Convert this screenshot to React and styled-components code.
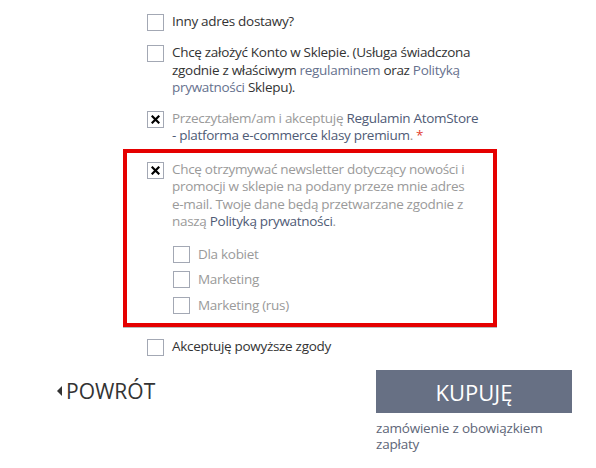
import React from 'react';
import styled, { createGlobalStyle } from 'styled-components';

const GlobalStyle = createGlobalStyle`
    html, body {
        margin: 0;
        padding: 0;
        background: #fff;
    }
    body {
        font-family: "Open Sans", sans-serif;
        font-stretch: 90%;
        color: #333;
    }
`;

const Page = styled.div`
    width: 596px;
    height: 468px;
    padding-top: 13px;
    box-sizing: border-box;
    overflow: hidden;
`;

const Consents = styled.div`
    display: flex;
    flex-direction: column;
    margin-left: 123px;
    width: 374px;
`;

const Consent = styled.label`
    display: flex;
    align-items: flex-start;
    gap: 8px;
    padding: 0 14px 0 24px;
    margin-bottom: ${props => props.$gap || 13}px;
    font-size: 13.5px;
    line-height: 17.5px;
    letter-spacing: -0.3px;
    color: ${props => props.$muted ? '#9a9a9a' : '#333'};
`;

const Highlight = styled.div`
    border: 4px solid #e50000;
    padding: 8px 16px 9px 20px;
    margin-bottom: 11px;
    box-shadow: 0 1px 0 #bbb;

    ${Consent} {
        padding: 0;
        margin-bottom: 0;
    }
`;

const Box = styled.span`
    flex: none;
    display: flex;
    align-items: center;
    justify-content: center;
    width: 17px;
    height: 17px;
    margin-top: 1px;
    box-sizing: border-box;
    border: 1px solid #a3a8b4;
    background: #fff;
`;

const Text = styled.span`
    flex: 1;
`;

const Link = styled.a`
    color: ${props => props.$dark ? '#4f5b76' : '#66718e'};
    text-decoration: none;
`;

const Required = styled.span`
    color: #e23b2e;
`;

const SubList = styled.div`
    display: flex;
    flex-direction: column;
    gap: 8px;
    margin: 15px 0 0 26px;

    ${Consent} {
        align-items: center;
    }
    ${Box} {
        margin-top: 0;
    }
`;

const Footer = styled.div`
    display: flex;
    justify-content: space-between;
    align-items: flex-start;
    padding: 0 24px 0 57px;
    margin-top: 1px;
`;

const Back = styled.a`
    display: flex;
    align-items: center;
    gap: 4px;
    margin-top: 10px;
    font-size: 21px;
    line-height: 22px;
    color: #333;
    cursor: pointer;
`;

const Arrow = styled.span`
    width: 0;
    height: 0;
    border-top: 5px solid transparent;
    border-bottom: 5px solid transparent;
    border-right: 5px solid #333;
`;

const Order = styled.div`
    width: 196px;
`;

const BuyButton = styled.button`
    display: block;
    width: 100%;
    height: 43px;
    border: none;
    background: #677084;
    color: #fff;
    font-family: inherit;
    font-stretch: inherit;
    font-size: 22px;
    cursor: pointer;
`;

const Note = styled.div`
    max-width: 180px;
    margin-top: 7px;
    font-size: 13.5px;
    line-height: 16px;
    letter-spacing: -0.2px;
    color: #5e6678;
`;

function Check({ checked }) {
    return (
        <Box>
            {checked && (
                <svg width="9" height="9" viewBox="0 0 9 9">
                    <path d="M1.5 1.5 L7.5 7.5 M7.5 1.5 L1.5 7.5" stroke="#000" strokeWidth="2.2" strokeLinecap="square" />
                </svg>
            )}
        </Box>
    );
}

export default function App() {
    return (
        <Page>
            <GlobalStyle />
            <Consents>
                <Consent>
                    <Check />
                    <Text>Inny adres dostawy?</Text>
                </Consent>
                <Consent>
                    <Check />
                    <Text>
                        Chcę założyć Konto w Sklepie. (Usługa świadczona zgodnie z właściwym{' '}
                        <Link>regulaminem</Link> oraz <Link>Polityką prywatności</Link> Sklepu).
                    </Text>
                </Consent>
                <Consent $muted $gap={4}>
                    <Check checked />
                    <Text>
                        Przeczytałem/am i akceptuję <Link $dark>Regulamin AtomStore - platforma e-commerce klasy premium</Link>. <Required>*</Required>
                    </Text>
                </Consent>
                <Highlight>
                    <Consent $muted>
                        <Check checked />
                        <Text>
                            Chcę otrzymywać newsletter dotyczący nowości i promocji w sklepie na podany przeze mnie adres e-mail. Twoje dane będą przetwarzane zgodnie z naszą <Link $dark>Polityką prywatności</Link>.
                        </Text>
                    </Consent>
                    <SubList>
                        {['Dla kobiet', 'Marketing', 'Marketing (rus)'].map(name => (
                            <Consent $muted key={name}>
                                <Check />
                                <Text>{name}</Text>
                            </Consent>
                        ))}
                    </SubList>
                </Highlight>
                <Consent>
                    <Check />
                    <Text>Akceptuję powyższe zgody</Text>
                </Consent>
            </Consents>
            <Footer>
                <Back>
                    <Arrow />
                    POWRÓT
                </Back>
                <Order>
                    <BuyButton>KUPUJĘ</BuyButton>
                    <Note>zamówienie z obowiązkiem zapłaty</Note>
                </Order>
            </Footer>
        </Page>
    );
}
